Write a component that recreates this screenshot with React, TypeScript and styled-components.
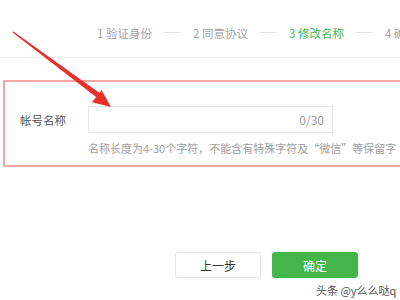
import React from 'react';
import styled, { createGlobalStyle } from 'styled-components';

const GlobalStyle = createGlobalStyle`
  body {
    margin: 0;
    background: #fff;
    font-family: "Noto Sans CJK SC", "Noto Sans", "Liberation Sans", sans-serif;
  }
`;

const Page = styled.div`
  position: relative;
  width: 400px;
  height: 300px;
  overflow: hidden;
  background: #fff;
`;

const StepBar = styled.div`
  box-sizing: border-box;
  width: 460px;
  height: 58px;
  padding: 8px 0 0 97px;
  display: flex;
  align-items: center;
  gap: 11px;
  border-bottom: 1px solid #f0f0f0;
  white-space: nowrap;
`;

const Step = styled.span<{ $active?: boolean }>`
  font-size: 11.5px;
  color: ${(p) => (p.$active ? '#44b549' : '#a3a3a3')};
`;

const StepLine = styled.span`
  width: 17px;
  height: 1px;
  background: #e4e4e4;
  margin: 0 1px;
`;

const FormArea = styled.div`
  box-sizing: border-box;
  width: 440px;
  margin: 22px 0 0 3px;
  padding: 24px 0 9px 15px;
  border: 2px solid #f5a5a5;
`;

const Row = styled.div`
  display: flex;
  align-items: center;
`;

const Label = styled.span`
  width: 68px;
  font-size: 11.5px;
  color: #555;
`;

const InputBox = styled.div`
  box-sizing: border-box;
  width: 245px;
  height: 27px;
  border: 1px solid #e7e7eb;
  display: flex;
  align-items: center;
  justify-content: flex-end;
  padding-right: 8px;
  font-size: 12px;
  color: #9a9a9a;
`;

const Hint = styled.div`
  margin: 7px 0 0 68px;
  font-size: 11px;
  color: #a0a0a0;
  white-space: nowrap;
`;

const Footer = styled.div`
  display: flex;
  gap: 11px;
  margin-top: 85px;
  padding-left: 175px;
`;

const Button = styled.button<{ $primary?: boolean }>`
  box-sizing: border-box;
  width: 86px;
  height: 26px;
  border-radius: 3px;
  font-family: inherit;
  font-size: 12px;
  border: 1px solid ${(p) => (p.$primary ? '#44b549' : '#e4e8eb')};
  background: ${(p) => (p.$primary ? '#44b549' : '#fff')};
  color: ${(p) => (p.$primary ? '#fff' : '#353535')};
  padding: 0;
`;

const Watermark = styled.span`
  position: absolute;
  left: 316px;
  top: 282px;
  font-size: 11px;
  color: #555;
  white-space: nowrap;
`;

const ArrowLayer = styled.svg`
  position: absolute;
  left: 0;
  top: 0;
  pointer-events: none;
`;

const steps = ['1 验证身份', '2 同意协议', '3 修改名称', '4 确认提交'];

export default function App() {
  return (
    <Page>
      <GlobalStyle />
      <StepBar>
        {steps.map((s, i) => (
          <React.Fragment key={s}>
            {i > 0 && <StepLine />}
            <Step $active={i === 2}>{s}</Step>
          </React.Fragment>
        ))}
      </StepBar>
      <FormArea>
        <Row>
          <Label>帐号名称</Label>
          <InputBox>0/30</InputBox>
        </Row>
        <Hint>名称长度为4-30个字符，不能含有特殊字符及“微信”等保留字</Hint>
      </FormArea>
      <Footer>
        <Button>上一步</Button>
        <Button $primary>确定</Button>
      </Footer>
      <Watermark>头条 @y么么哒q</Watermark>
      <ArrowLayer width="400" height="300" viewBox="0 0 400 300">
        <polygon points="12.6,32.6 13.4,31.4 99.6,93 96.4,97.2" fill="#e8302d" />
        <polygon points="111,107 92,102.3 101.5,89.9" fill="#e8302d" />
      </ArrowLayer>
    </Page>
  );
}
